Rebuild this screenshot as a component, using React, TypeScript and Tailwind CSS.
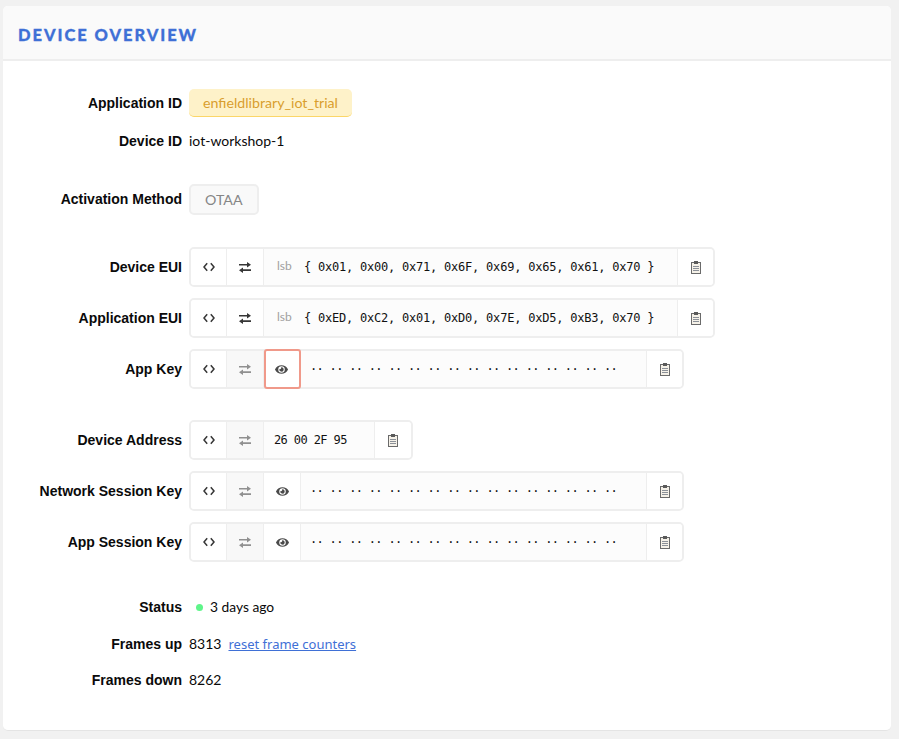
import React from "react";
import { FaEye } from "react-icons/fa";

const Angle = () => (
  <svg width="12" height="10" viewBox="0 0 12 10" fill="none" stroke="#363636" strokeWidth="1.500">
    <path d="M4.200 1.200 1 5l3.200 3.800M7.800 1.200 11 5 7.800 8.800" />
  </svg>
);

const Swap = () => (
  <svg width="12" height="11" viewBox="0 0 12 11" fill="currentColor">
    <path d="M0 1.900H8V0L12 2.700 8 5.400V3.600H0z" />
    <path d="M12 7.300H4V5.500L0 8.200 4 10.900V9H12z" />
  </svg>
);

const Clip = () => (
  <svg width="10" height="13" viewBox="0 0 10 13" fill="none">
    <rect x="0.500" y="1.500" width="9" height="11" fill="#f5f1e8" stroke="#6a6a6a" />
    <rect x="3" y="0" width="4" height="3" fill="#5a5a5a" />
    <path d="M2 5.500h6M2 7.500h6M2 9.500h6" stroke="#8b9098" />
  </svg>
);

const Seg = ({ children, className = "" }: { children: React.ReactNode; className?: string }) => (
  <div className={`flex items-center justify-center h-full border-r border-[#eeeeee] ${className}`}>{children}</div>
);

const dots = "·· ·· ·· ·· ·· ·· ·· ·· ·· ·· ·· ·· ·· ·· ·· ··";

function CodeBox({ value, lsb, swapOn, eye, eyeFocus, width, valueWidth, tracking }: { value: string; lsb?: boolean; swapOn?: boolean; eye?: boolean; eyeFocus?: boolean; width: string; valueWidth: string; tracking: string }) {
  return (
    <div className={`flex items-stretch h-[40px] rounded-[5px] border-2 border-[#eeeeee] bg-[#fcfcfc] ${width}`}>
      <Seg className="w-[36px] bg-white rounded-l-[3px]"><Angle /></Seg>
      <Seg className={`w-[37px] ${swapOn ? "bg-white text-[#363636]" : "bg-[#f8f8f8] text-[#909090]"}`}>
        <Swap />
      </Seg>
      {eye && (
        <div className={`flex items-center justify-center w-[37px] text-[#4a4a4a] bg-white ${eyeFocus ? "border-2 border-[#f0998a] rounded-[3px] -my-[2px] pr-[2px]" : "h-full border-r border-[#eeeeee]"}`}>
          <FaEye size={13} />
        </div>
      )}
      {lsb && <div className="pl-[13px] pb-[2px] w-[40px] flex items-center text-[12px] text-[#a0a0a0] font-['Lato',sans-serif]">lsb</div>}
      <div className={`flex items-center font-['DejaVu_Sans_Mono',monospace] text-[12px] text-[#111111] whitespace-pre ${tracking} ${valueWidth}`}>
        {value}
      </div>
      <div className="flex-1 flex items-center justify-center border-l border-[#eeeeee] bg-white rounded-r-[3px]"><Clip /></div>
    </div>
  );
}

function Row({ label, children, className = "" }: { label: string; children: React.ReactNode; className?: string }) {
  return (
    <div className={`flex items-center ${className}`}>
      <div className="w-[179px] text-right font-['Liberation_Sans',sans-serif] font-bold text-[14px] text-[#0a0a0a] mr-[7px] whitespace-nowrap">{label}</div>
      {children}
    </div>
  );
}

export default function App() {
  return (
    <div className="min-h-[739px] bg-[#f1f1f1] pt-[6px] pl-[3px] pr-[8px] pb-[8px] font-['Lato',sans-serif] text-[14px] text-[#0a0a0a]">
      <div className="bg-white rounded-[5px] h-[725px] overflow-hidden border-b border-[#e4e4e4]">
        <div className="h-[55px] bg-[#fafafa] border-b-2 border-[#eeeeee] flex items-center pl-[15px] pt-[5px]">
          <h1 className="font-['Lato',sans-serif] font-black text-[16.500px] tracking-[1.950px] text-[#3f70d6] uppercase [-webkit-text-stroke:0.300px_#3f70d6]">Device Overview</h1>
        </div>
        <div className="pt-[28px] flex flex-col">
          <Row label="Application ID">
            <span className="h-[28px] flex items-center px-[14px] text-[14.200px] rounded-[5px] bg-[#fef2c9] border-b border-[#fbd668] text-[#d99e2e]">enfieldlibrary_iot_trial</span>
          </Row>
          <Row label="Device ID" className="mt-[14px]"><span className="-translate-y-[1px]">iot-workshop-1</span></Row>
          <Row label="Activation Method" className="mt-[32px]">
            <span className="h-[31px] flex items-center px-[14px] text-[14.200px] rounded-[5px] bg-[#f9f9f9] border-2 border-[#eeeeee] text-[#868686]">OTAA</span>
          </Row>
          <Row label="Device EUI" className="mt-[32px]">
            <CodeBox lsb swapOn width="w-[526px]" valueWidth="w-[373px]" tracking="tracking-[-0.220px]" value="{ 0x01, 0x00, 0x71, 0x6F, 0x69, 0x65, 0x61, 0x70 }" />
          </Row>
          <Row label="Application EUI" className="mt-[11px]">
            <CodeBox lsb swapOn width="w-[526px]" valueWidth="w-[373px]" tracking="tracking-[-0.220px]" value="{ 0xED, 0xC2, 0x01, 0xD0, 0x7E, 0xD5, 0xB3, 0x70 }" />
          </Row>
          <Row label="App Key" className="mt-[11px]">
            <CodeBox eye eyeFocus width="w-[495px]" valueWidth="w-[345px] pl-[9px]" tracking="tracking-[-0.690px]" value={dots} />
          </Row>
          <Row label="Device Address" className="mt-[31px]">
            <CodeBox width="w-[224px]" valueWidth="w-[110px] pl-[10px]" tracking="tracking-[-0.600px]" value="26 00 2F 95" />
          </Row>
          <Row label="Network Session Key" className="mt-[11px]">
            <CodeBox eye width="w-[495px]" valueWidth="w-[345px] pl-[9px]" tracking="tracking-[-0.690px]" value={dots} />
          </Row>
          <Row label="App Session Key" className="mt-[11px]">
            <CodeBox eye width="w-[495px]" valueWidth="w-[345px] pl-[9px]" tracking="tracking-[-0.690px]" value={dots} />
          </Row>
          <Row label="Status" className="mt-[35px]">
            <span className="flex items-center">
              <span className="w-[7px] h-[7px] rounded-full bg-[#5ff58a] ml-[7px] mr-[7px]" />
              <span className="text-[13.800px]">3 days ago</span>
            </span>
          </Row>
          <Row label="Frames up" className="mt-[16px]">
            <span className="-translate-y-[1px]">8313</span>
            <a className="ml-[7px] underline text-[#3f70d6] font-['Noto_Sans',sans-serif] text-[13px]" href="#">reset frame counters</a>
          </Row>
          <Row label="Frames down" className="mt-[15px]"><span className="-translate-y-[1px]">8262</span></Row>
        </div>
      </div>
    </div>
  );
}
